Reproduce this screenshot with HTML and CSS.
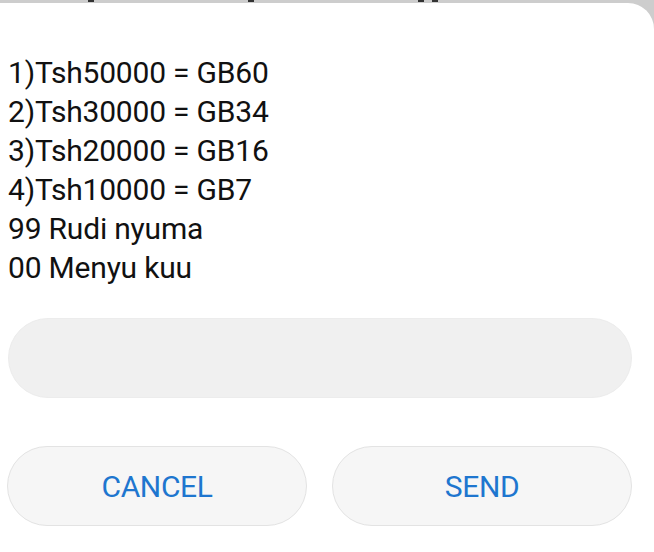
FILE: index.html
```html
<!DOCTYPE html>
<html>
<head>
<meta charset="utf-8">
<link rel="stylesheet" href="styles.css">
</head>
<body>
<div class="peek">
  <span class="mark m1"></span>
  <span class="mark m2"></span>
  <span class="mark m3"></span>
  <span class="mark m4"></span>
</div>
<div class="dialog">
  <div class="message">
    <div>1)Tsh50000 = GB60</div>
    <div>2)Tsh30000 = GB34</div>
    <div>3)Tsh20000 = GB16</div>
    <div>4)Tsh10000 = GB7</div>
    <div>99 Rudi nyuma</div>
    <div>00 Menyu kuu</div>
  </div>
  <div class="input"></div>
  <div class="actions">
    <button class="btn">CANCEL</button>
    <button class="btn">SEND</button>
  </div>
</div>
</body>
</html>
```
FILE: styles.css
```css
html, body {
  margin: 0;
  padding: 0;
}
body {
  width: 654px;
  height: 552px;
  overflow: hidden;
  background: #cdcdcd;
  font-family: Roboto, "Noto Sans", sans-serif;
}
.peek {
  height: 3px;
  display: flex;
  align-items: flex-start;
}
.mark {
  display: block;
  height: 2px;
  background: #333;
}
.m1 { width: 6px; margin-left: 88px; }
.m2 { width: 6px; margin-left: 154px; }
.m3 { width: 6px; margin-left: 164px; }
.m4 { width: 6px; margin-left: 8px; }
.dialog {
  height: 549px;
  background: #ffffff;
  border-top-right-radius: 26px;
  padding: 50px 22px 0 8px;
  box-sizing: border-box;
}
.message {
  font-size: 30px;
  line-height: 39px;
  color: #111111;
  letter-spacing: -0.2px;
}
.input {
  margin-top: 31px;
  height: 80px;
  border-radius: 40px;
  background: #f0f0f0;
  border: 1px solid #ececec;
  box-sizing: border-box;
}
.actions {
  margin-top: 48px;
  display: flex;
  gap: 25px;
  margin-left: -1px;
}
.btn {
  width: 300px;
  height: 80px;
  border-radius: 40px;
  background: #f6f6f6;
  border: 1px solid #e3e3e3;
  color: #1e76cf;
  font-family: Roboto, "Noto Sans", sans-serif;
  font-size: 30px;
  letter-spacing: -0.4px;
  padding: 0;
}
```
